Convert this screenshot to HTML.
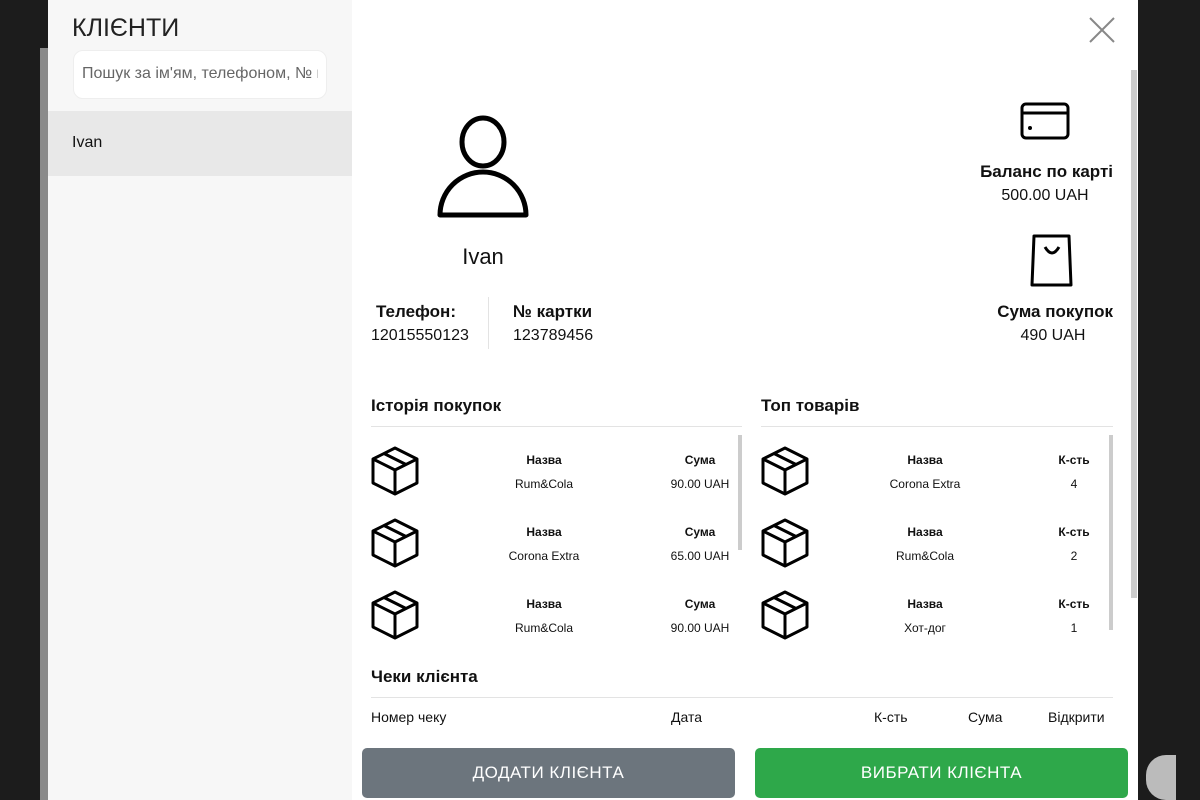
<!DOCTYPE html>
<html><head><meta charset="utf-8"><style>
*{margin:0;padding:0;box-sizing:border-box}
body{width:1200px;height:800px;overflow:hidden;background:#1c1c1c;font-family:"Liberation Sans",sans-serif;color:#111;position:relative}
.a{position:absolute}
.b{font-weight:bold}
.c{text-align:center}
</style></head><body>
<div class="a" style="left:40px;top:48px;width:8px;height:752px;background:#8a8a8a"></div>
<div class="a" style="left:48px;top:0;width:304px;height:800px;background:#f7f7f7"></div>
<div class="a" style="left:72px;top:14px;font-size:25px;color:#222">КЛІЄНТИ</div>
<div class="a" style="left:73px;top:50px;width:254px;height:49px;background:#fff;border-radius:10px;border:1px solid #eee"></div>
<div class="a" style="left:82px;top:65px;width:236px;overflow:hidden;white-space:nowrap;font-size:16px;color:#666">Пошук за ім'ям, телефоном, № картки</div>
<div class="a" style="left:48px;top:111px;width:304px;height:65px;background:#e8e8e8"></div>
<div class="a" style="left:72px;top:134px;font-size:16px">Ivan</div>

<div class="a" style="left:352px;top:0;width:786px;height:800px;background:#fff"></div>
<div class="a" style="left:1131px;top:70px;width:6px;height:528px;background:#ccc"></div>
<svg class="a" style="left:1088px;top:16px" width="28" height="28"><path d="M2 2L26 26M26 2L2 26" stroke="#888" stroke-width="2"/></svg>

<svg class="a" style="left:436px;top:115px" width="94" height="105"><ellipse cx="47" cy="27" rx="21" ry="24" fill="none" stroke="#000" stroke-width="5"/><path d="M4 100 A43 43 0 0 1 90 100 Z" fill="none" stroke="#000" stroke-width="5" stroke-linejoin="round"/></svg>
<div class="a c" style="left:433px;top:244px;width:100px;font-size:22px">Ivan</div>
<div class="a b" style="left:376px;top:302px;font-size:17px">Телефон:</div>
<div class="a" style="left:371px;top:327px;font-size:16px">12015550123</div>
<div class="a" style="left:488px;top:297px;width:1px;height:52px;background:#e3e3e3"></div>
<div class="a b" style="left:513px;top:302px;font-size:17px">№ картки</div>
<div class="a" style="left:513px;top:327px;font-size:16px">123789456</div>

<svg class="a" style="left:1020px;top:102px" width="50" height="38"><rect x="2" y="2" width="46" height="34" rx="4" fill="none" stroke="#000" stroke-width="3"/><line x1="2" y1="11" x2="48" y2="11" stroke="#000" stroke-width="3"/><circle cx="10" cy="26" r="2" fill="#000"/></svg>
<div class="a b" style="left:960px;top:162px;width:153px;text-align:right;font-size:17px">Баланс по карті</div>
<div class="a c" style="left:990px;top:187px;width:110px;font-size:16px">500.00 UAH</div>
<svg class="a" style="left:1030px;top:234px" width="44" height="54"><path d="M4 2H39L41 51H2Z" fill="none" stroke="#000" stroke-width="3" stroke-linejoin="round"/><path d="M15 13Q22 25 29 13" fill="none" stroke="#000" stroke-width="3"/></svg>
<div class="a b" style="left:960px;top:302px;width:153px;text-align:right;font-size:17px">Сума покупок</div>
<div class="a c" style="left:1003px;top:327px;width:100px;font-size:16px">490 UAH</div>

<div class="a b" style="left:371px;top:396px;font-size:17px">Історія покупок</div>
<div class="a" style="left:371px;top:426px;width:371px;height:1px;background:#e3e3e3"></div>
<div class="a" style="left:738px;top:435px;width:4px;height:115px;background:#ccc"></div>
<div class="a b" style="left:761px;top:396px;font-size:17px">Топ товарів</div>
<div class="a" style="left:761px;top:426px;width:352px;height:1px;background:#e3e3e3"></div>
<div class="a" style="left:1109px;top:435px;width:4px;height:195px;background:#ccc"></div>

<svg width="0" height="0" style="position:absolute"><defs><g id="box"><path d="M24 2L46 13V37L24 48L2 37V13Z M2 13L24 24L46 13 M24 24V48 M13 7.5L35 18.5" fill="none" stroke="#000" stroke-width="3" stroke-linejoin="round"/></g></defs></svg>

<div id="rows"></div>
<!-- history rows -->
<svg class="a" style="left:371px;top:446px" width="48" height="50"><use href="#box"/></svg>
<svg class="a" style="left:371px;top:518px" width="48" height="50"><use href="#box"/></svg>
<svg class="a" style="left:371px;top:590px" width="48" height="50"><use href="#box"/></svg>
<svg class="a" style="left:761px;top:446px" width="48" height="50"><use href="#box"/></svg>
<svg class="a" style="left:761px;top:518px" width="48" height="50"><use href="#box"/></svg>
<svg class="a" style="left:761px;top:590px" width="48" height="50"><use href="#box"/></svg>

<div class="a c b" style="left:494px;top:453px;width:100px;font-size:12px">Назва</div>
<div class="a c" style="left:494px;top:477px;width:100px;font-size:12px">Rum&amp;Cola</div>
<div class="a c b" style="left:660px;top:453px;width:80px;font-size:12px">Сума</div>
<div class="a c" style="left:660px;top:477px;width:80px;font-size:12px">90.00 UAH</div>
<div class="a c b" style="left:494px;top:525px;width:100px;font-size:12px">Назва</div>
<div class="a c" style="left:494px;top:549px;width:100px;font-size:12px">Corona Extra</div>
<div class="a c b" style="left:660px;top:525px;width:80px;font-size:12px">Сума</div>
<div class="a c" style="left:660px;top:549px;width:80px;font-size:12px">65.00 UAH</div>
<div class="a c b" style="left:494px;top:597px;width:100px;font-size:12px">Назва</div>
<div class="a c" style="left:494px;top:621px;width:100px;font-size:12px">Rum&amp;Cola</div>
<div class="a c b" style="left:660px;top:597px;width:80px;font-size:12px">Сума</div>
<div class="a c" style="left:660px;top:621px;width:80px;font-size:12px">90.00 UAH</div>

<div class="a c b" style="left:875px;top:453px;width:100px;font-size:12px">Назва</div>
<div class="a c" style="left:875px;top:477px;width:100px;font-size:12px">Corona Extra</div>
<div class="a c b" style="left:1034px;top:453px;width:80px;font-size:12px">К-сть</div>
<div class="a c" style="left:1034px;top:477px;width:80px;font-size:12px">4</div>
<div class="a c b" style="left:875px;top:525px;width:100px;font-size:12px">Назва</div>
<div class="a c" style="left:875px;top:549px;width:100px;font-size:12px">Rum&amp;Cola</div>
<div class="a c b" style="left:1034px;top:525px;width:80px;font-size:12px">К-сть</div>
<div class="a c" style="left:1034px;top:549px;width:80px;font-size:12px">2</div>
<div class="a c b" style="left:875px;top:597px;width:100px;font-size:12px">Назва</div>
<div class="a c" style="left:875px;top:621px;width:100px;font-size:12px">Хот-дог</div>
<div class="a c b" style="left:1034px;top:597px;width:80px;font-size:12px">К-сть</div>
<div class="a c" style="left:1034px;top:621px;width:80px;font-size:12px">1</div>

<div class="a b" style="left:371px;top:667px;font-size:17px">Чеки клієнта</div>
<div class="a" style="left:371px;top:697px;width:742px;height:1px;background:#e3e3e3"></div>
<div class="a" style="left:371px;top:709px;font-size:14px">Номер чеку</div>
<div class="a" style="left:671px;top:709px;font-size:14px">Дата</div>
<div class="a" style="left:874px;top:709px;font-size:14px">К-сть</div>
<div class="a" style="left:968px;top:709px;font-size:14px">Сума</div>
<div class="a" style="left:1048px;top:709px;font-size:14px">Відкрити</div>

<div class="a c" style="left:362px;top:748px;width:373px;height:50px;background:#6c757d;border-radius:5px;color:#fff;font-size:17px;line-height:50px;letter-spacing:0.5px">ДОДАТИ КЛІЄНТА</div>
<div class="a c" style="left:755px;top:748px;width:373px;height:50px;background:#2ea84a;border-radius:5px;color:#fff;font-size:17px;line-height:50px;letter-spacing:0.5px">ВИБРАТИ КЛІЄНТА</div>
<div class="a" style="left:1146px;top:755px;width:30px;height:45px;background:#bbb;border-radius:20px 0 0 20px"></div>
</body></html>
